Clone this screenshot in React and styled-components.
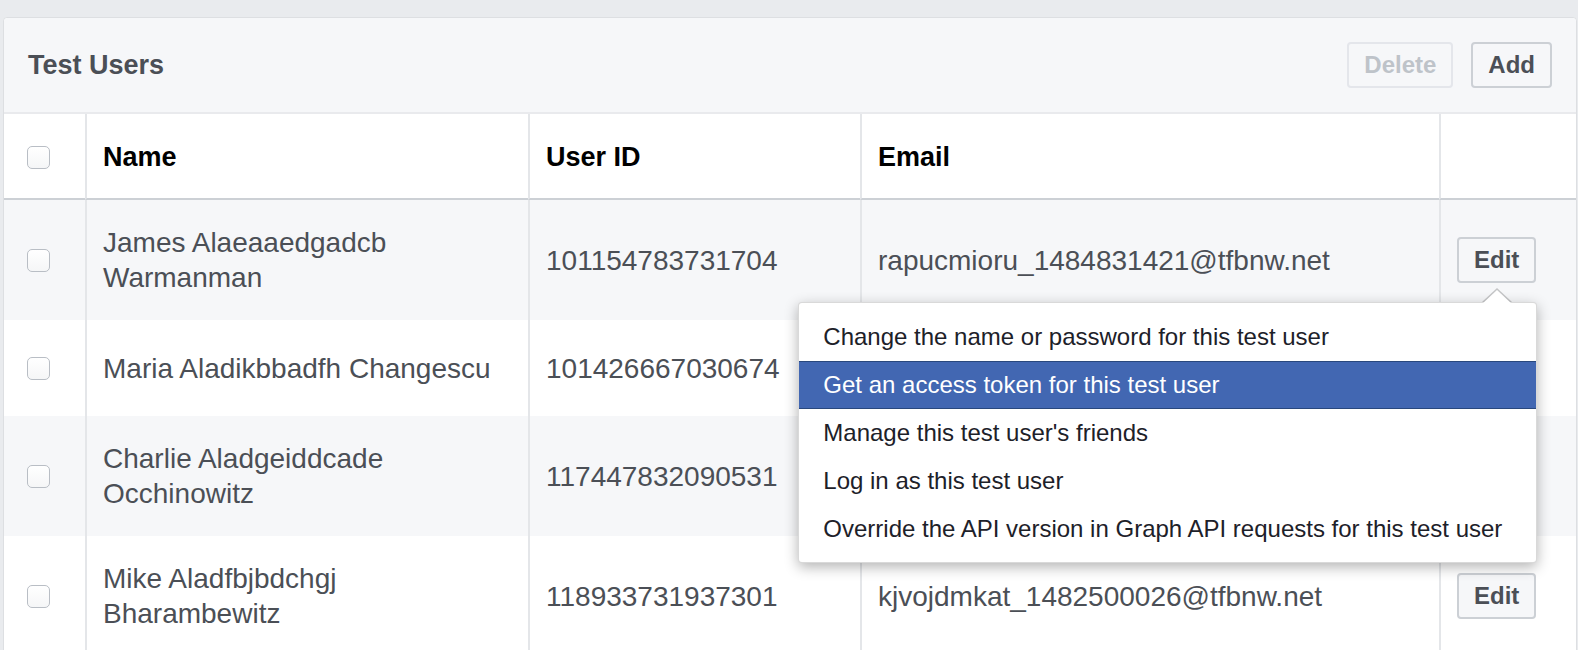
import React from 'react'
import styled, { createGlobalStyle } from 'styled-components'

const GlobalStyle = createGlobalStyle`
  body {
    margin: 0;
    background: #e9ebee;
    font-family: "Liberation Sans", Helvetica, Arial, sans-serif;
  }
  * { box-sizing: border-box; }
`

const Panel = styled.section`
  margin: 17px 1px 0 3px;
  background: #fff;
  border: 1px solid #dddfe2;
  border-radius: 4px 4px 0 0;
`

const PanelHeader = styled.header`
  display: flex;
  align-items: center;
  justify-content: space-between;
  height: 96px;
  padding: 0 24px 0 24px;
  background: #f6f7f9;
  border-bottom: 2px solid #e9eaed;
  border-radius: 4px 4px 0 0;
`

const Title = styled.h2`
  margin: 0;
  font-size: 27px;
  font-weight: bold;
  color: #4b4f56;
`

const Actions = styled.div`
  display: flex;
  gap: 18px;
`

const Button = styled.button`
  display: block;
  height: 46px;
  padding: 0 15px;
  border: 2px solid ${p => (p.disabled ? '#e4e6eb' : '#ccd0d5')};
  border-radius: 4px;
  background: #f6f7f9;
  color: ${p => (p.disabled ? '#bec3c9' : '#4b4f56')};
  font: bold 24px "Liberation Sans", Helvetica, Arial, sans-serif;
`

const Table = styled.table`
  width: 100%;
  table-layout: fixed;
  border-collapse: separate;
  border-spacing: 0;
`

const Th = styled.th`
  padding: 26px 16px 23px;
  text-align: left;
  font-size: 27px;
  line-height: 35px;
  font-weight: bold;
  color: #000;
  border-bottom: 2px solid #ccd0d5;
  & + & {
    border-left: 2px solid #e4e6e9;
  }
`

const Row = styled.tr`
  background: ${p => (p.$striped ? '#f6f7f9' : '#fff')};
`

const Td = styled.td`
  padding: 25px 16px;
  font-size: 28px;
  line-height: 35px;
  color: #4b4f56;
  vertical-align: middle;
  & + & {
    border-left: 2px solid #e4e6e9;
  }
`

const Checkbox = styled.input.attrs({ type: 'checkbox' })`
  appearance: none;
  display: block;
  margin: 0 0 0 7px;
  width: 23px;
  height: 23px;
  border: 1px solid #b9bec5;
  border-radius: 5px;
  background: linear-gradient(#fff, #f5f6f7);
`

const EditWrap = styled.div`
  position: relative;
  display: flex;
  width: max-content;
`

const Menu = styled.ul`
  position: absolute;
  top: calc(100% + 19px);
  right: -1px;
  z-index: 10;
  width: 739px;
  margin: 0;
  padding: 10px 0 9px;
  list-style: none;
  background: #fff;
  border: 1px solid rgba(0, 0, 0, 0.15);
  border-radius: 4px;
  box-shadow: 0 4px 14px rgba(0, 0, 0, 0.3);

  &::before,
  &::after {
    content: '';
    position: absolute;
    right: 24px;
    top: -15px;
    border: 15px solid transparent;
    border-top: 0;
    border-bottom: 14px solid rgba(0, 0, 0, 0.2);
  }
  &::after {
    top: -13px;
    border-bottom-color: #fff;
  }
`

const MenuItem = styled.li`
  height: 48px;
  padding: 0 24px;
  line-height: 46px;
  font-size: 24px;
  white-space: nowrap;
  color: ${p => (p.$active ? '#fff' : '#1d2129')};
  background: ${p => (p.$active ? '#4267b2' : 'transparent')};
  border-top: 1px solid ${p => (p.$active ? '#29487d' : 'transparent')};
  border-bottom: 1px solid ${p => (p.$active ? '#29487d' : 'transparent')};
`

// emails of rows 2 and 3 sit under the open menu and are not visible
const users = [
  { name: 'James Alaeaaedgadcb Warmanman', id: '101154783731704', email: 'rapucmioru_1484831421@tfbnw.net', open: true },
  { name: 'Maria Aladikbbadfh Changescu', id: '101426667030674', email: '' },
  { name: 'Charlie Aladgeiddcade Occhinowitz', id: '117447832090531', email: '' },
  { name: 'Mike Aladfbjbdchgj Bharambewitz', id: '118933731937301', email: 'kjvojdmkat_1482500026@tfbnw.net' },
]

const menuItems = [
  'Change the name or password for this test user',
  'Get an access token for this test user',
  "Manage this test user's friends",
  'Log in as this test user',
  'Override the API version in Graph API requests for this test user',
]

export default function App() {
  return (
    <>
      <GlobalStyle />
      <Panel>
        <PanelHeader>
          <Title>Test Users</Title>
          <Actions>
            <Button disabled>Delete</Button>
            <Button>Add</Button>
          </Actions>
        </PanelHeader>
        <Table>
          <colgroup>
            <col style={{ width: 81 }} />
            <col style={{ width: 443 }} />
            <col style={{ width: 332 }} />
            <col style={{ width: 579 }} />
            <col />
          </colgroup>
          <thead>
            <tr>
              <Th><Checkbox /></Th>
              <Th>Name</Th>
              <Th>User ID</Th>
              <Th>Email</Th>
              <Th />
            </tr>
          </thead>
          <tbody>
            {users.map((u, i) => (
              <Row key={u.id} $striped={i % 2 === 0}>
                <Td><Checkbox /></Td>
                <Td>{u.name}</Td>
                <Td>{u.id}</Td>
                <Td>{u.email}</Td>
                <Td>
                  <EditWrap>
                    <Button>Edit</Button>
                    {u.open && (
                      <Menu>
                        {menuItems.map((m, j) => (
                          <MenuItem key={m} $active={j === 1}>{m}</MenuItem>
                        ))}
                      </Menu>
                    )}
                  </EditWrap>
                </Td>
              </Row>
            ))}
          </tbody>
        </Table>
      </Panel>
    </>
  )
}
